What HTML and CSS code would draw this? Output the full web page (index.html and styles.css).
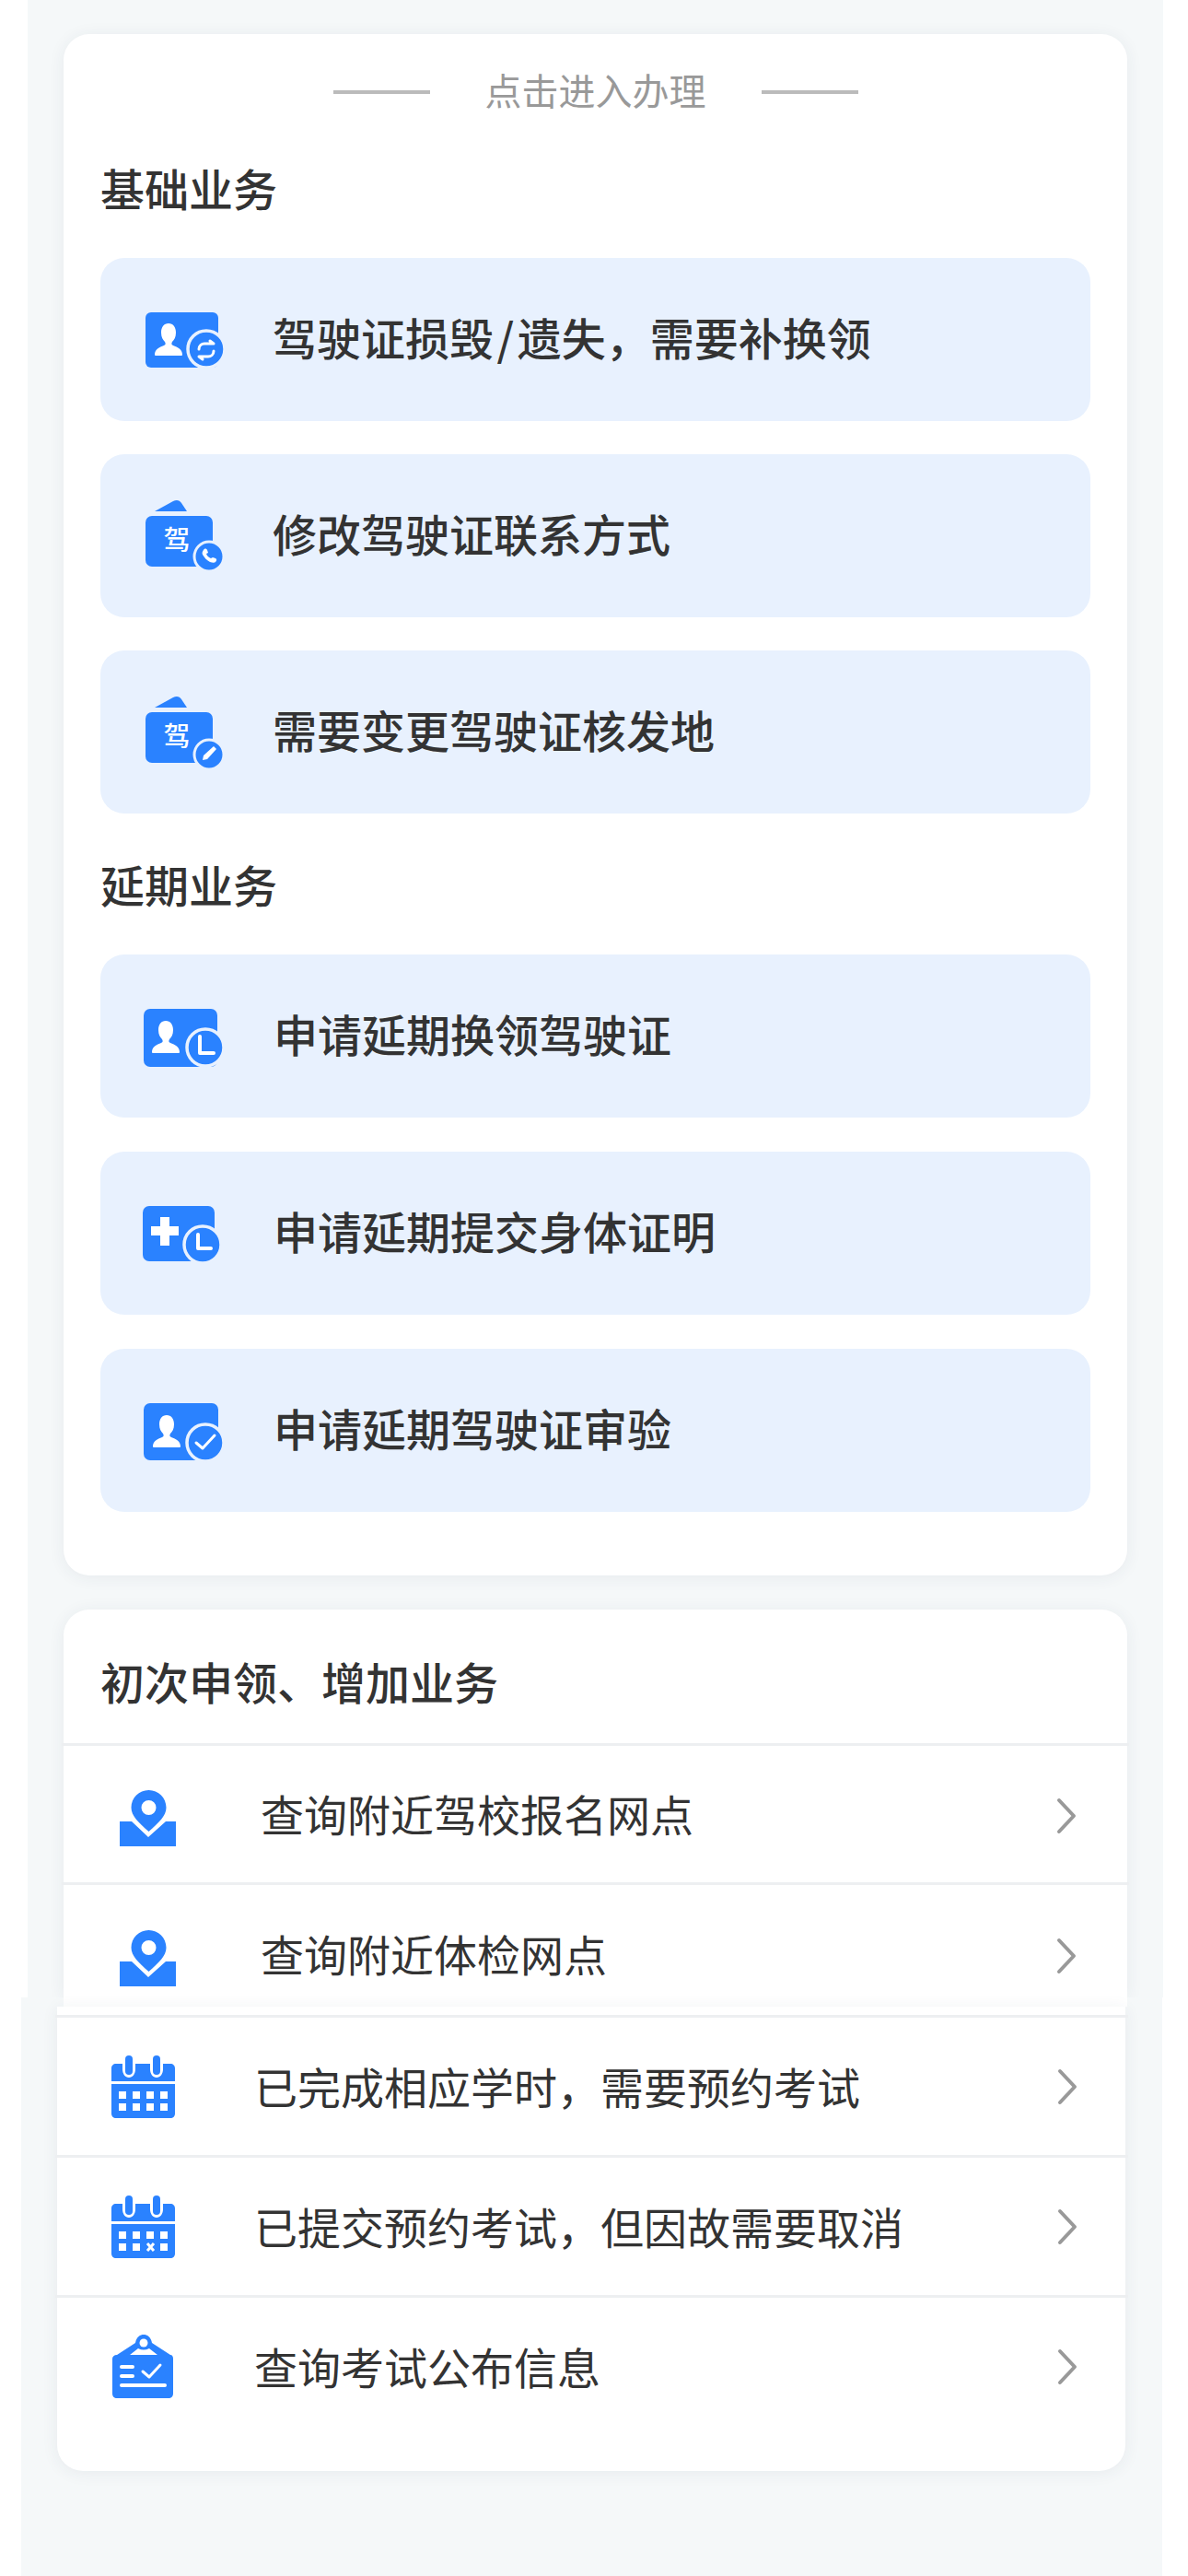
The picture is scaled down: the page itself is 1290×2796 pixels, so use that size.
FILE: index.html
```html
<!DOCTYPE html>
<html lang="zh-CN">
<head>
<meta charset="utf-8">
<title>点击进入办理</title>
<link rel="stylesheet" href="styles.css">
</head>
<body>
<svg class="defs" width="0" height="0" aria-hidden="true">
  <defs>
    <path id="person" d="M18 66c0-6 5-8 10-10 2-1 2-2 1-4-2-2-4-5-4-10 0-6 3-10 8-10s8 4 8 10c0 5-2 8-4 10-1 2-1 3 1 4 5 2 10 4 10 10 0 1-1 1-2 1H20c-1 0-2 0-2-1z"/>
    <g id="jia">
      <path d="M18 23 38 12c4-2 7-1 9 2l6 9z"/>
      <rect x="8" y="28" width="73" height="55" rx="7"/>
    </g>
    <g id="pin">
      <path d="M20 56h13l18 17 19-17h11v27H20z"/>
      <path fill-rule="evenodd" d="M51.500 22c10.500 0 19 8.500 19 19 0 9-8 16-19 26-11-10-19-17-19-26 0-10.500 8.500-19 19-19zm0 11a8 8 0 1 0 0 16 8 8 0 0 0 0-16z"/>
    </g>
    <g id="cal">
      <path d="M16 30c0-3 2-5 5-5h7v6c0 5 3 9 7 9s7-4 7-9v-6h16v6c0 5 3 9 7 9s7-4 7-9v-6h8c3 0 5 2 5 5v14H16z"/>
      <rect x="31" y="16" width="8" height="21" rx="4"/>
      <rect x="61" y="16" width="8" height="21" rx="4"/>
      <path d="M16 47h69v32c0 3-2 5-5 5H21c-3 0-5-2-5-5z"/>
      <g fill="#fff">
        <rect x="24" y="55" width="8" height="8"/><rect x="39" y="55" width="8" height="8"/><rect x="54" y="55" width="8" height="8"/><rect x="69" y="55" width="8" height="8"/>
        <rect x="24" y="68" width="8" height="8"/><rect x="39" y="68" width="8" height="8"/><rect x="69" y="68" width="8" height="8"/>
      </g>
    </g>
  </defs>
</svg>

<main class="sheet sheet-top">
  <section class="card card-main">
    <div class="legend"><i class="legend-line"></i><span>点击进入办理</span><i class="legend-line"></i></div>

    <h2 class="group-title first">基础业务</h2>
    <div class="btn-list">
      <a class="btn">
        <svg class="ico" viewBox="0 0 100 100"><rect x="8" y="20" width="79" height="60" rx="6"/><use href="#person" class="on"/><circle cx="74" cy="60" r="20" class="badge"/><path class="ln ln-thin" d="M66 60c0-4 3-6 6-6h10l-4-3M82 62c0 4-3 6-6 6H66l4 3"/></svg>
        <span>驾驶证损毁<b class="slash">/</b>遗失，需要补换领</span>
      </a>
      <a class="btn">
        <svg class="ico" viewBox="0 0 100 100"><use href="#jia"/><text x="42" y="65" class="jia-t">驾</text><circle cx="77" cy="72" r="16" class="badge badge-sm"/><path class="on" d="M71 65c1-2 3-2 4 0l1 3-2 1c1 3 3 4 5 5l2-1 3 1c2 1 1 3 0 4-1 1-3 1-6 0-4-2-6-5-8-8-1-2 0-4 1-5z"/></svg>
        <span>修改驾驶证联系方式</span>
      </a>
      <a class="btn">
        <svg class="ico" viewBox="0 0 100 100"><use href="#jia"/><text x="42" y="65" class="jia-t">驾</text><circle cx="77" cy="74" r="16" class="badge badge-sm"/><path class="on" d="M82 65l3 3-10 11-5 1 1-5z"/></svg>
        <span>需要变更驾驶证核发地</span>
      </a>
    </div>

    <h2 class="group-title">延期业务</h2>
    <div class="btn-list btn-list-wide">
      <a class="btn btn-alt">
        <svg class="ico" viewBox="0 0 100 100"><rect x="6" y="20" width="80" height="63" rx="7"/><use href="#person" class="on" transform="translate(-3 1)"/><circle cx="73" cy="62" r="20" class="badge"/><path class="ln" d="M67 50v18h15"/></svg>
        <span>申请延期换领驾驶证</span>
      </a>
      <a class="btn btn-alt">
        <svg class="ico" viewBox="0 0 100 100"><rect x="5" y="20" width="78" height="60" rx="7"/><path class="on" d="M24 32h10v10h10v10H34v11H24V52H14V42h10z"/><circle cx="70" cy="62" r="20" class="badge"/><path class="ln" d="M65 51v15h14"/></svg>
        <span>申请延期提交身体证明</span>
      </a>
      <a class="btn btn-alt">
        <svg class="ico" viewBox="0 0 100 100"><rect x="6" y="20" width="81" height="62" rx="7"/><use href="#person" class="on" transform="translate(-2 1)"/><circle cx="73" cy="63" r="20" class="badge"/><path class="ln ln-thin" d="M63 63l7 6 13-14"/></svg>
        <span>申请延期驾驶证审验</span>
      </a>
    </div>
  </section>

  <section class="card card-list">
    <h2 class="list-title">初次申领、增加业务</h2>
    <a class="row">
      <svg class="ico" viewBox="0 0 100 100"><use href="#pin"/></svg>
      <span>查询附近驾校报名网点</span>
      <svg class="chev" viewBox="0 0 22 40"><path d="M3 3 19 20 3 37"/></svg>
    </a>
    <a class="row row-cut">
      <svg class="ico" viewBox="0 0 100 100"><use href="#pin"/></svg>
      <span>查询附近体检网点</span>
      <svg class="chev" viewBox="0 0 22 40"><path d="M3 3 19 20 3 37"/></svg>
    </a>
  </section>
</main>

<div class="sheet sheet-bottom">
  <div class="stub"></div>
  <section class="card card-lower">
    <a class="row row-low">
      <svg class="ico" viewBox="0 0 100 100"><use href="#cal"/><rect x="54" y="68" width="8" height="8" class="on"/></svg>
      <span>已完成相应学时，需要预约考试</span>
      <svg class="chev" viewBox="0 0 22 40"><path d="M3 3 19 20 3 37"/></svg>
    </a>
    <a class="row row-low">
      <svg class="ico" viewBox="0 0 100 100"><use href="#cal"/><path class="x" d="M55 68l7 8m0-8-7 8"/></svg>
      <span>已提交预约考试，但因故需要取消</span>
      <svg class="chev" viewBox="0 0 22 40"><path d="M3 3 19 20 3 37"/></svg>
    </a>
    <a class="row row-low">
      <svg class="ico" viewBox="0 0 100 100">
        <path d="M22 37 42 24c1-6 5-9 9-9s8 3 9 9l20 13c2 0 3 2 3 4v38c0 3-2 5-5 5H22c-3 0-5-2-5-5V41c0-2 2-4 5-4z"/>
        <circle cx="51" cy="24" r="4.500" class="on"/>
        <path class="on" d="M36 37l9-7c4 2 8 2 12 0l9 7z"/>
        <path class="ln" d="M27 50h12M27 60h12M27 70h47"/>
        <path class="ln ln-thin" d="M50 55l7 6 12-13"/>
      </svg>
      <span>查询考试公布信息</span>
      <svg class="chev" viewBox="0 0 22 40"><path d="M3 3 19 20 3 37"/></svg>
    </a>
  </section>
</div>
</body>
</html>
```

FILE: styles.css
```css
* { box-sizing: border-box; }
html, body { margin: 0; padding: 0; background: #fff; }
body {
  width: 1290px;
  height: 2796px;
  overflow: hidden;
  font-family: "Noto Sans CJK SC", "Noto Sans", sans-serif;
  color: #333;
}
.defs { display: block; }
.sheet { background: #f5f8f9; }
.sheet-top { width: 1233px; height: 2168px; margin-left: 30px; padding: 37px 0 0 39px; }
.sheet-bottom { width: 1239px; height: 628px; margin-left: 23px; }

.card {
  background: #fff;
  border-radius: 28px;
  box-shadow: 0 2px 18px rgba(40, 60, 80, .07);
}
.card-main { width: 1155px; height: 1673px; padding: 40px 40px 0; }
.card-list { width: 1155px; height: 421px; margin-top: 37px; border-radius: 28px 28px 0 0; padding-top: 47px; }
.stub { width: 1155px; height: 10px; margin-left: 46px; background: #fff; position: relative; }
.card-lower { width: 1160px; height: 504px; margin-left: 39px; border-radius: 0 0 28px 28px; padding-top: 9px; position: relative; }

.legend {
  display: flex;
  justify-content: center;
  align-items: center;
  gap: 60px;
  height: 40px;
  font-size: 40px;
  line-height: 40px;
  color: #999;
}
.legend-line { display: block; width: 105px; height: 4px; margin-top: 6px; background: #bbb; }

.group-title { margin: 46px 0 47px; font-size: 48px; line-height: 60px; font-weight: 500; color: #333; }
.group-title.first { margin: 56px 0 47px; }
.list-title { margin: 0 0 38px 40px; font-size: 48px; line-height: 60px; font-weight: 500; color: #333; }

.btn-list { display: flex; flex-direction: column; gap: 36px; }
.btn-list-wide { gap: 37px; }
.btn {
  display: flex;
  align-items: center;
  height: 177px;
  padding-left: 41px;
  border-radius: 26px;
  background: #e8f1fe;
  font-size: 48px;
  font-weight: 500;
  color: #333;
  white-space: nowrap;
}
.btn span { margin-left: 46px; padding-bottom: 7px; }
.btn-alt span { margin-left: 47px; }
.slash { margin: 0 3.5px; font-weight: 500; }

.ico { display: block; flex: none; width: 100px; height: 100px; fill: #2a82ff; }
.ico .on, .on { fill: #fff; }
.ico .badge { fill: #2a82ff; stroke: #e8f1fe; stroke-width: 3.5px; }
.ico .badge-sm { stroke-width: 3px; }
.ico .ln { fill: none; stroke: #fff; stroke-width: 4px; stroke-linecap: round; stroke-linejoin: round; }
.ico .ln-thin { stroke-width: 3px; }
.ico .x { fill: none; stroke: #fff; stroke-width: 3px; }
.jia-t { fill: #fff; font-size: 29px; text-anchor: middle; font-family: "Noto Sans CJK SC", sans-serif; }

.row {
  display: flex;
  align-items: center;
  height: 151px;
  margin: 0 -2px;
  padding: 26px 57px 22px 43px;
  border-top: 3px solid #edeff1;
  font-size: 47px;
  font-weight: 400;
  color: #333;
  white-space: nowrap;
}
.row > span { margin-left: 73px; padding-bottom: 7px; }
.row-cut { height: 125px; padding-bottom: 0; }
.row-cut .ico, .row-cut .chev, .row-cut > span { margin-bottom: -5px; }
.row-low { height: 152px; padding: 25px 55px 24px 45px; margin-right: -3px; }
.row-low > span { margin-left: 71px; padding-bottom: 4px; }
.chev { display: block; flex: none; width: 22px; height: 40px; margin-left: auto; fill: none; stroke: #999; stroke-width: 4px; stroke-linecap: round; stroke-linejoin: round; }
```
